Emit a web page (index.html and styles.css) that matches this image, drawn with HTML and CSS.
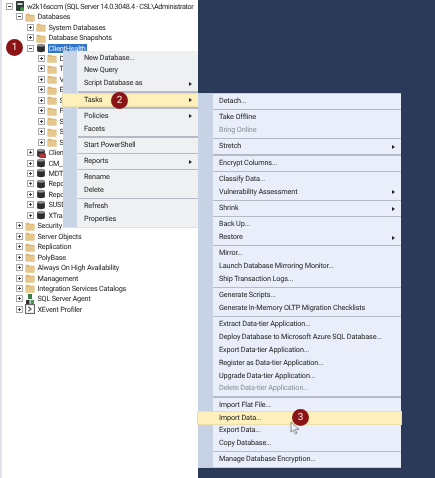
FILE: index.html
```html
<!DOCTYPE html>
<html lang="en">
<head>
<meta charset="UTF-8" />
<title>Object Explorer - Tasks menu</title>
<link rel="stylesheet" href="styles.css">
</head>
<body>
<svg class="defs" width="0" height="0">
<symbol id="plus" viewBox="0 0 7 7"><rect x=".5" y=".5" width="6" height="6" fill="#fff" stroke="#a8a8a8"/><path d="M2 3.500h3M3.500 2v3" stroke="#444"/></symbol>
<symbol id="minus" viewBox="0 0 7 7"><rect x=".5" y=".5" width="6" height="6" fill="#fff" stroke="#a8a8a8"/><path d="M2 3.500h3" stroke="#444"/></symbol>
<symbol id="folder" viewBox="0 0 9 9"><path d="M.5 1.500h3l1 1h4v6h-8z" fill="#dcb876"/><path d="M.5 3.500h8v5h-8z" fill="#e6c88f"/></symbol>
<symbol id="db" viewBox="0 0 9 9"><path d="M1 2v5.500c0 1 7 1 7 0V2z" fill="#2e2e2e"/><ellipse cx="4.500" cy="2" rx="3.500" ry="1.300" fill="#8b8f94"/></symbol>
<symbol id="dbred" viewBox="0 0 9 9"><path d="M1 2v5.500c0 1 7 1 7 0V2z" fill="#2e2e2e"/><ellipse cx="4.500" cy="2" rx="3.500" ry="1.300" fill="#8b8f94"/><rect x="3" y="5" width="6" height="4" fill="#b3323c"/></symbol>
<symbol id="server" viewBox="0 0 10 10"><rect x="1" y="0" width="8" height="10" rx="1" fill="#2f3a36"/><rect x="2.500" y="2" width="5" height="2" fill="#cfd6d2"/><circle cx="7" cy="8" r="2" fill="#3c9a4b"/></symbol>
<symbol id="agent" viewBox="0 0 9 10"><rect x="2.500" y="0" width="4" height="5" fill="#3f7d46"/><rect x=".5" y="6" width="3.500" height="4" fill="#333"/><rect x="5" y="6" width="3.500" height="4" fill="#4a9a52"/></symbol>
<symbol id="profiler" viewBox="0 0 9 9"><rect x=".5" y=".5" width="8" height="8" fill="#fff" stroke="#666"/><path d="M3 2.500l2.500 2-2.500 2" fill="none" stroke="#555"/></symbol>
</svg>

<div class="app">
	<div class="tree">
		<div class="row lvl0"><svg class="exp"><use href="#minus"/></svg><svg class="ico"><use href="#server"/></svg><span class="server">w2k16sccm (SQL Server 14.0.3048.4 - CSL\Administrator</span></div>
		<div class="row lvl1"><svg class="exp"><use href="#minus"/></svg><svg class="ico"><use href="#folder"/></svg><span>Databases</span></div>
		<div class="row lvl2"><svg class="exp"><use href="#plus"/></svg><svg class="ico"><use href="#folder"/></svg><span>System Databases</span></div>
		<div class="row lvl2"><svg class="exp"><use href="#plus"/></svg><svg class="ico"><use href="#folder"/></svg><span>Database Snapshots</span></div>
		<div class="row lvl2"><svg class="exp"><use href="#minus"/></svg><svg class="ico"><use href="#db"/></svg><span class="selected">ClientHealth</span></div>
		<div class="row lvl3"><svg class="exp"><use href="#plus"/></svg><svg class="ico"><use href="#folder"/></svg><span>D</span></div>
		<div class="row lvl3"><svg class="exp"><use href="#plus"/></svg><svg class="ico"><use href="#folder"/></svg><span>T</span></div>
		<div class="row lvl3"><svg class="exp"><use href="#plus"/></svg><svg class="ico"><use href="#folder"/></svg><span>V</span></div>
		<div class="row lvl3"><svg class="exp"><use href="#plus"/></svg><svg class="ico"><use href="#folder"/></svg><span>E</span></div>
		<div class="row lvl3"><svg class="exp"><use href="#plus"/></svg><svg class="ico"><use href="#folder"/></svg><span>S</span></div>
		<div class="row lvl3"><svg class="exp"><use href="#plus"/></svg><svg class="ico"><use href="#folder"/></svg><span>P</span></div>
		<div class="row lvl3"><svg class="exp"><use href="#plus"/></svg><svg class="ico"><use href="#folder"/></svg><span>S</span></div>
		<div class="row lvl3"><svg class="exp"><use href="#plus"/></svg><svg class="ico"><use href="#folder"/></svg><span>S</span></div>
		<div class="row lvl3"><svg class="exp"><use href="#plus"/></svg><svg class="ico"><use href="#folder"/></svg><span>S</span></div>
		<div class="row lvl2"><svg class="exp"><use href="#plus"/></svg><svg class="ico"><use href="#dbred"/></svg><span>Clien</span></div>
		<div class="row lvl2"><svg class="exp"><use href="#plus"/></svg><svg class="ico"><use href="#db"/></svg><span>CM_</span></div>
		<div class="row lvl2"><svg class="exp"><use href="#plus"/></svg><svg class="ico"><use href="#db"/></svg><span>MDT</span></div>
		<div class="row lvl2"><svg class="exp"><use href="#plus"/></svg><svg class="ico"><use href="#db"/></svg><span>Repo</span></div>
		<div class="row lvl2"><svg class="exp"><use href="#plus"/></svg><svg class="ico"><use href="#db"/></svg><span>Repo</span></div>
		<div class="row lvl2"><svg class="exp"><use href="#plus"/></svg><svg class="ico"><use href="#db"/></svg><span>SUSD</span></div>
		<div class="row lvl2"><svg class="exp"><use href="#plus"/></svg><svg class="ico"><use href="#db"/></svg><span>XTra</span></div>
		<div class="row lvl1"><svg class="exp"><use href="#plus"/></svg><svg class="ico"><use href="#folder"/></svg><span>Security</span></div>
		<div class="row lvl1"><svg class="exp"><use href="#plus"/></svg><svg class="ico"><use href="#folder"/></svg><span>Server Objects</span></div>
		<div class="row lvl1"><svg class="exp"><use href="#plus"/></svg><svg class="ico"><use href="#folder"/></svg><span>Replication</span></div>
		<div class="row lvl1"><svg class="exp"><use href="#plus"/></svg><svg class="ico"><use href="#folder"/></svg><span>PolyBase</span></div>
		<div class="row lvl1"><svg class="exp"><use href="#plus"/></svg><svg class="ico"><use href="#folder"/></svg><span>Always On High Availability</span></div>
		<div class="row lvl1"><svg class="exp"><use href="#plus"/></svg><svg class="ico"><use href="#folder"/></svg><span>Management</span></div>
		<div class="row lvl1"><svg class="exp"><use href="#plus"/></svg><svg class="ico"><use href="#folder"/></svg><span>Integration Services Catalogs</span></div>
		<div class="row lvl1"><svg class="exp"><use href="#plus"/></svg><svg class="ico"><use href="#agent"/></svg><span>SQL Server Agent</span></div>
		<div class="row lvl1"><svg class="exp"><use href="#plus"/></svg><svg class="ico"><use href="#profiler"/></svg><span>XEvent Profiler</span></div>
	</div>
	<div class="backdrop"></div>

	<div class="menu context">
		<div class="item">New Database...</div>
		<div class="item">New Query</div>
		<div class="item more">Script Database as</div>
		<div class="sep"></div>
		<div class="item more hot">Tasks</div>
		<div class="sep"></div>
		<div class="item more">Policies</div>
		<div class="item">Facets</div>
		<div class="sep"></div>
		<div class="item">Start PowerShell</div>
		<div class="sep"></div>
		<div class="item more">Reports</div>
		<div class="sep"></div>
		<div class="item">Rename</div>
		<div class="item">Delete</div>
		<div class="sep"></div>
		<div class="item">Refresh</div>
		<div class="item">Properties</div>
	</div>

	<div class="menu tasks">
		<div class="item">Detach...</div>
		<div class="sep"></div>
		<div class="item">Take Offline</div>
		<div class="item off">Bring Online</div>
		<div class="sep"></div>
		<div class="item more">Stretch</div>
		<div class="sep"></div>
		<div class="item">Encrypt Columns...</div>
		<div class="sep"></div>
		<div class="item">Classify Data...</div>
		<div class="item more">Vulnerability Assessment</div>
		<div class="sep"></div>
		<div class="item more">Shrink</div>
		<div class="sep"></div>
		<div class="item">Back Up...</div>
		<div class="item more">Restore</div>
		<div class="sep"></div>
		<div class="item">Mirror...</div>
		<div class="item">Launch Database Mirroring Monitor...</div>
		<div class="item">Ship Transaction Logs...</div>
		<div class="sep"></div>
		<div class="item">Generate Scripts...</div>
		<div class="item">Generate In-Memory OLTP Migration Checklists</div>
		<div class="sep"></div>
		<div class="item">Extract Data-tier Application...</div>
		<div class="item">Deploy Database to Microsoft Azure SQL Database...</div>
		<div class="item">Export Data-tier Application...</div>
		<div class="item">Register as Data-tier Application...</div>
		<div class="item">Upgrade Data-tier Application...</div>
		<div class="item off">Delete Data-tier Application...</div>
		<div class="sep"></div>
		<div class="item">Import Flat File...</div>
		<div class="item hot">Import Data...</div>
		<div class="item">Export Data...</div>
		<div class="item">Copy Database...</div>
		<div class="sep"></div>
		<div class="item">Manage Database Encryption...</div>
	</div>

	<div class="badge b1">1</div>
	<div class="badge b2">2</div>
	<div class="badge b3">3</div>
	<svg class="cursor" viewBox="0 0 10 14"><path d="M1 1v10l2.500-2 1.800 4 1.700-.8-1.800-3.800H9z" fill="#eef1f6" stroke="#6f7478" stroke-width=".8"/></svg>
</div>
</body>
</html>
```
FILE: styles.css
```css
* {
	margin: 0;
	padding: 0;
	box-sizing: border-box;
}

body {
	width: 435px;
	height: 478px;
	overflow: hidden;
	font: 7.3px Roboto, sans-serif;
	letter-spacing: -.15px;
	text-rendering: geometricPrecision;
	color: #1e1e1e;
}

.defs {
	position: absolute;
}

.app {
	position: relative;
	display: flex;
	height: 478px;
	filter: blur(.3px);
}

.tree {
	width: 198px;
	padding: 1px 0 0;
	background-color: #fff;
	border-left: 2px solid #dfe3ea;
	overflow: hidden;
	white-space: nowrap;
	letter-spacing: -.22px;
}

.server {
	letter-spacing: -.36px;
}

.backdrop {
	flex: 1;
	background-color: #2a3a58;
}

.row {
	display: flex;
	align-items: center;
	height: 10.46px;
}

.lvl0 { padding-left: 3.500px; }
.lvl1 { padding-left: 14px; }
.lvl2 { padding-left: 25px; }
.lvl3 { padding-left: 36px; }

.exp {
	flex: none;
	width: 7px;
	height: 7px;
	margin-right: 2px;
}

.ico {
	flex: none;
	width: 10px;
	height: 10px;
	margin-right: 2.500px;
}

.selected {
	margin-left: -1px;
	padding: 0 1px;
	background-color: #2f76c8;
	color: #e8f0fa;
}

.menu {
	position: absolute;
	padding: 1px 0;
	background-repeat: no-repeat;
}

.context {
	left: 63px;
	top: 50.600px;
	width: 135px;
	background-color: #eff0f2;
	background-image: linear-gradient(#c9d5e6, #c9d5e6);
	background-size: 14px 100%;
	border-bottom: 1px solid #e4e2c8;
}

.tasks {
	left: 198px;
	top: 93.100px;
	width: 203px;
	background-color: #e9eefa;
	background-image: linear-gradient(#c7d3e5, #c7d3e5);
	background-size: 15px 100%;
	border-top: 1px solid #c8ccd2;
	border-bottom: 1px solid #c8ccd2;
}

.item {
	position: relative;
	height: 12.830px;
	line-height: 12.830px;
	padding-left: 21px;
	white-space: nowrap;
}

.off {
	color: #8b8f96;
}

.more::after {
	content: "";
	position: absolute;
	right: 6px;
	top: 4.500px;
	border-left: 3px solid #222;
	border-top: 2px solid transparent;
	border-bottom: 2px solid transparent;
}

.hot {
	background-color: #fdf0bb;
	box-shadow: 0 0 0 1px #ecdfae;
}

.sep {
	height: 3.430px;
	margin-left: 15px;
	padding: 1px 0;
	background-color: #b4bac6;
	background-clip: content-box;
}

.badge {
	position: absolute;
	width: 17px;
	height: 17px;
	border-radius: 50%;
	background-color: #8a1416;
	color: #f4e6e0;
	font-size: 10px;
	letter-spacing: 0;
	line-height: 17px;
	text-align: center;
}

.b1 { left: 6px; top: 39px; }
.b2 { left: 111px; top: 92px; }
.b3 { left: 292px; top: 409px; }

.cursor {
	position: absolute;
	left: 290px;
	top: 421px;
	width: 10px;
	height: 14px;
}
```
